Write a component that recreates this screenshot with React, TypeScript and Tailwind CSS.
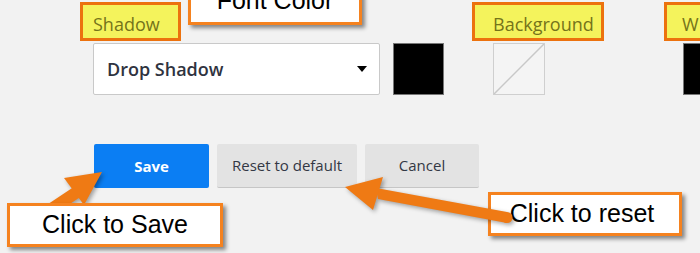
const ORANGE = '#ef7a14'

function LabelTag({ text, className }: { text: string; className: string }) {
  return (
    <div
      className={`h-[39px] border-[3px] border-[#ec720e] bg-[#f4f35c] pt-[7px] text-[18px] leading-[24px] text-[#74741a] whitespace-nowrap ${className}`}
    >
      {text}
    </div>
  )
}

function Callout({ text, className }: { text: string; className: string }) {
  return (
    <div
      className={`absolute flex items-center justify-center border-[3px] border-[#f5821f] bg-white text-[25px] text-black shadow-[3px_3px_4px_rgba(0,0,0,0.45)] font-['Liberation_Sans',Arial,sans-serif] ${className}`}
    >
      {text}
    </div>
  )
}

export default function App() {
  return (
    <div className="relative h-[253px] w-[700px] overflow-hidden bg-[#f2f2f2] font-['Open_Sans',sans-serif]">
      {/* Field row */}
      <div className="flex pl-[80px] pt-[2px]">
        <div className="flex flex-col">
          <LabelTag text="Shadow" className="w-[101px] pl-[10px]" />
          <div className="ml-[13px] mt-[2px] flex gap-[13px]">
            <div className="flex h-[52px] w-[287px] items-center justify-between rounded-[2px] border border-[#c9c9c9] bg-white pl-[13px] pr-[12px]">
              <span className="text-[18px] font-semibold text-[#2f3340]">Drop Shadow</span>
              <span className="h-0 w-0 border-x-[5px] border-t-[6px] border-x-transparent border-t-black" />
            </div>
            <div className="h-[52px] w-[51px] border border-[#777] bg-black" />
          </div>
        </div>
        <div className="ml-[28px] flex flex-col">
          <LabelTag text="Background" className="w-[132px] pl-[18px]" />
          <div className="ml-[21px] mt-[2px] h-[52px] w-[52px] border border-[#cfcfcf] bg-[#f4f4f4]">
            <svg width="50" height="50" viewBox="0 0 50 50">
              <line x1="0" y1="50" x2="50" y2="0" stroke="#c8c8c8" strokeWidth="1.5" />
            </svg>
          </div>
        </div>
        <div className="ml-[60px] flex flex-col">
          <LabelTag text="W" className="w-[60px] pl-[15px]" />
          <div className="ml-[19px] mt-[2px] h-[52px] w-[51px] border border-[#777] bg-black" />
        </div>
      </div>

      {/* Buttons */}
      <div className="mt-[49px] flex gap-[8px] pl-[94px]">
        <button className="h-[44px] w-[115px] rounded-[2px] bg-[#0b7ef3] text-[15px] font-bold text-white">Save</button>
        <button className="h-[44px] w-[140px] rounded-[2px] border-b border-[#c6c6c6] bg-[#e3e3e3] text-[15px] text-[#333845]">
          Reset to default
        </button>
        <button className="h-[44px] w-[114px] rounded-[2px] border-b border-[#c6c6c6] bg-[#e3e3e3] text-[15px] text-[#333845]">
          Cancel
        </button>
      </div>

      {/* Annotations */}
      <Callout text="Font Color" className="left-[188px] top-[-22px] h-[47px] w-[174px] pt-[1px] items-start" />

      <svg className="absolute left-0 top-0 drop-shadow-[2px_2px_2px_rgba(0,0,0,0.35)]" width="700" height="253">
        <line x1="35" y1="220" x2="80" y2="190" stroke={ORANGE} strokeWidth="12" strokeLinecap="round" />
        <polygon points="102,172 64,178 84,205" fill={ORANGE} />
      </svg>
      <Callout text="Click to Save" className="left-[7px] top-[203px] h-[44px] w-[216px]" />

      <Callout text="Click to reset" className="left-[488px] top-[192px] h-[44px] w-[194px] pr-[6px]" />
      <svg className="absolute left-0 top-0 drop-shadow-[2px_2px_2px_rgba(0,0,0,0.35)]" width="700" height="253">
        <polygon points="376,188 378,199 507,223 507,212" fill={ORANGE} />
        <circle cx="507" cy="217.5" r="5.5" fill={ORANGE} />
        <polygon points="345,187 383,177 373,210" fill={ORANGE} />
      </svg>
    </div>
  )
}
